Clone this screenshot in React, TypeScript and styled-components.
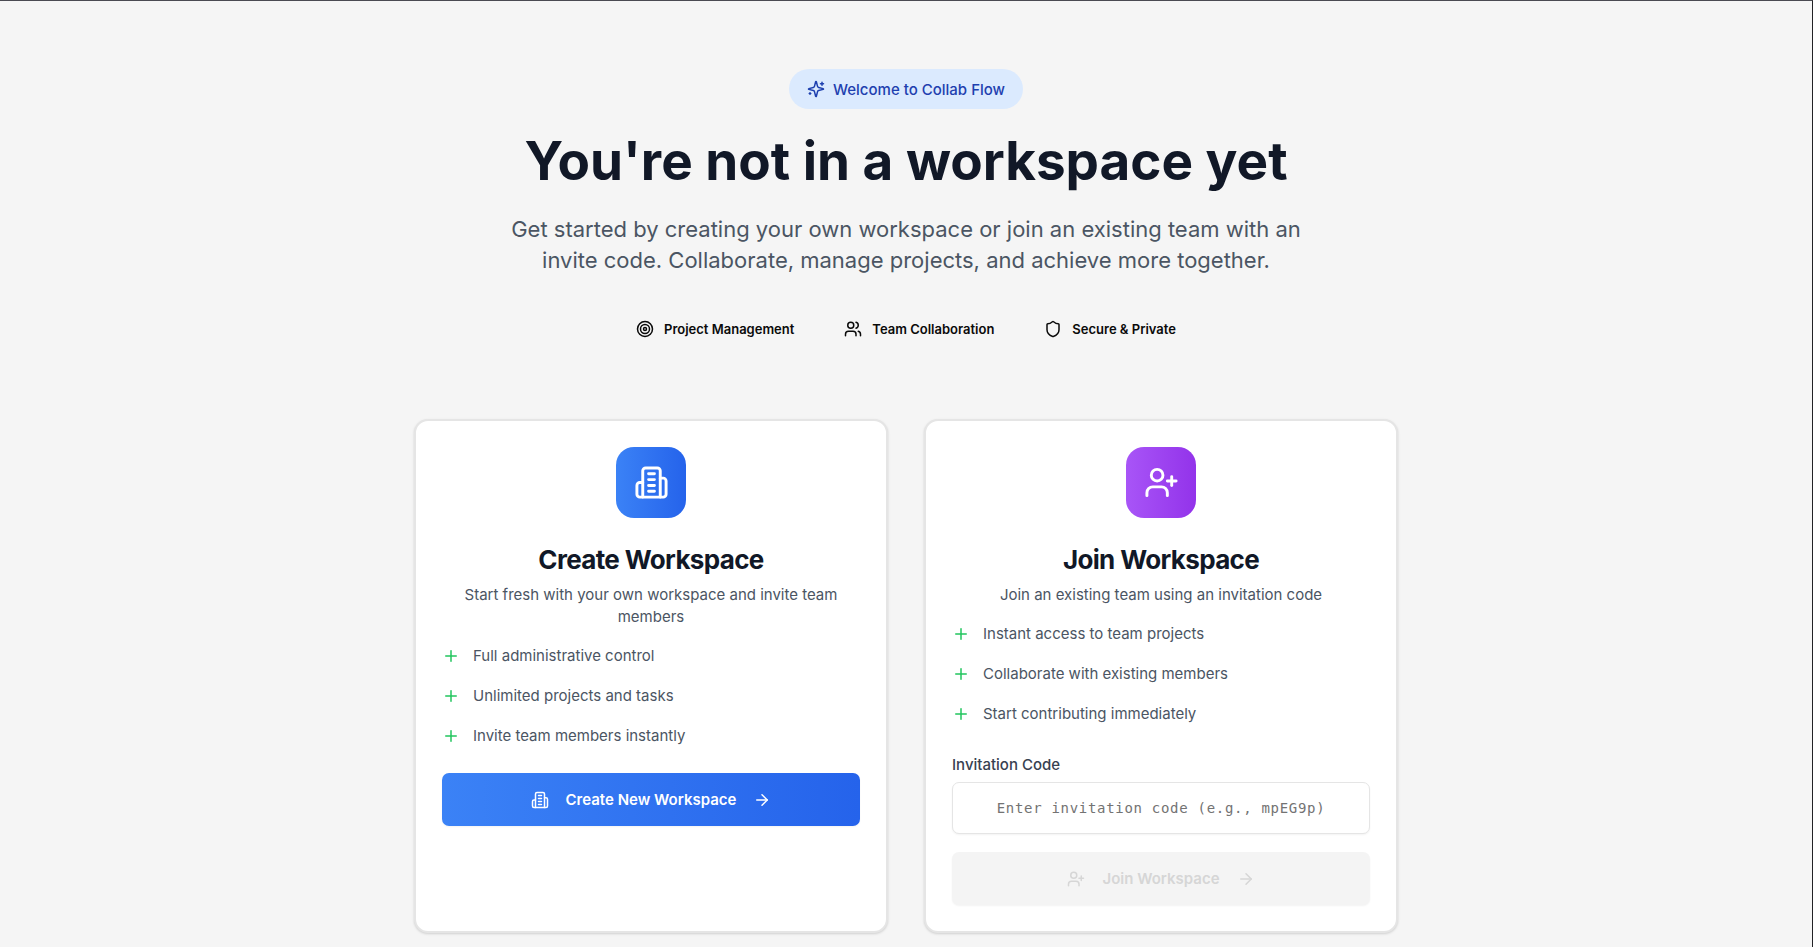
import React, { useState } from "react";
import styled, { createGlobalStyle } from "styled-components";
import { ArrowRight, Plus, Shield, UserPlus } from "lucide-react";

const GlobalStyle = createGlobalStyle`
  *, *::before, *::after { box-sizing: border-box; }
  body {
    margin: 0;
    background: #f5f5f5;
    font-family: Inter, "Liberation Sans", sans-serif;
    color: #0a0a0a;
  }
  h1, h2, p, ul { margin: 0; padding: 0; }
  ul { list-style: none; }
  svg { flex-shrink: 0; }
`;

const Page = styled.main`
  min-height: 100vh;
  display: flex;
  flex-direction: column;
  align-items: center;
  padding: 68px 18px 12px;
  border-top: 1px solid #4a4a52;
  border-right: 1px solid #222226;
`;

const Hero = styled.header`
  display: flex;
  flex-direction: column;
  align-items: center;
  text-align: center;
`;

const WelcomePill = styled.div`
  display: flex;
  align-items: center;
  gap: 8px;
  height: 40px;
  padding: 0 18px;
  border-radius: 20px;
  background: #dbeafe;
  color: #1e40af;
  font-size: 15px;
  font-weight: 500;
`;

const Title = styled.h1`
  margin-top: 26px;
  font-size: 53px;
  line-height: 53px;
  font-weight: 700;
  color: #111827;
`;

const Lead = styled.p`
  max-width: 840px;
  margin-top: 26px;
  font-size: 22px;
  line-height: 31px;
  color: #4b5563;
`;

const Highlights = styled.ul`
  display: flex;
  flex-wrap: wrap;
  justify-content: center;
  gap: 18px 50px;
  margin-top: 42px;
`;

const Highlight = styled.li`
  display: flex;
  align-items: center;
  gap: 10px;
  height: 22px;
  font-size: 13px;
  font-weight: 600;
`;

const Cards = styled.div`
  display: grid;
  grid-template-columns: repeat(auto-fit, minmax(360px, 1fr));
  gap: 36px;
  width: 100%;
  max-width: 984px;
  margin-top: 79px;
`;

const Card = styled.section`
  display: flex;
  flex-direction: column;
  padding: 26px;
  border: 2px solid #e5e5e5;
  border-radius: 14px;
  background: #ffffff;
  box-shadow: 0 1px 3px rgba(0, 0, 0, 0.1), 0 1px 2px rgba(0, 0, 0, 0.06);
`;

const CardHead = styled.div`
  display: flex;
  flex-direction: column;
  align-items: center;
  text-align: center;
`;

const IconTile = styled.div<{ $from: string; $to: string }>`
  display: flex;
  align-items: center;
  justify-content: center;
  width: 70px;
  height: 71px;
  border-radius: 18px;
  background: linear-gradient(to right, ${(p) => p.$from}, ${(p) => p.$to});
  color: #ffffff;
`;

const CardTitle = styled.h2`
  margin-top: 24px;
  font-size: 26px;
  line-height: 35px;
  font-weight: 700;
  letter-spacing: -0.025em;
  color: #111827;
`;

const CardText = styled.p`
  margin-top: 7px;
  font-size: 15px;
  line-height: 22px;
  color: #4b5563;
`;

const Perks = styled.ul`
  display: flex;
  flex-direction: column;
  gap: 18px;
  margin: 17px 0 26px;
`;

const Perk = styled.li`
  display: flex;
  align-items: center;
  gap: 13px;
  font-size: 15px;
  line-height: 22px;
  color: #4b5563;

  svg { color: #22c55e; }
`;

const ActionButton = styled.button`
  display: flex;
  align-items: center;
  justify-content: center;
  gap: 17px;
  width: 100%;
  height: 53px;
  border: 0;
  border-radius: 7px;
  background: linear-gradient(to right, #3b82f6, #2563eb);
  box-shadow: 0 1px 2px rgba(0, 0, 0, 0.05);
  color: #ffffff;
  font-family: inherit;
  font-size: 15px;
  font-weight: 600;
  cursor: pointer;

  &:disabled {
    background: #f4f4f4;
    color: #d6d6d6;
    cursor: default;
  }
`;

const JoinForm = styled.form`
  display: flex;
  flex-direction: column;
`;

const FieldLabel = styled.label`
  font-size: 15px;
  line-height: 28px;
  font-weight: 500;
  color: #374151;
`;

const CodeInput = styled.input`
  width: 100%;
  height: 52px;
  margin: 3px 0 18px;
  padding: 0 13px;
  border: 1px solid #e5e5e5;
  border-radius: 7px;
  background: #ffffff;
  box-shadow: 0 1px 2px rgba(0, 0, 0, 0.05);
  color: #0a0a0a;
  font-family: "DejaVu Sans Mono", "Liberation Mono", monospace;
  font-size: 14px;
  letter-spacing: 0.05em;
  text-align: center;

  &::placeholder { color: #737373; opacity: 1; }
`;

type IconProps = { size: number };

const BuildingIcon = ({ size }: IconProps) => (
  <svg width={size} height={size} viewBox="0 0 24 24" fill="none" stroke="currentColor" strokeWidth={2} strokeLinecap="round" strokeLinejoin="round" aria-hidden="true">
    <path d="M6 22V4a2 2 0 0 1 2-2h8a2 2 0 0 1 2 2v18Z" />
    <path d="M6 12H4a2 2 0 0 0-2 2v6a2 2 0 0 0 2 2h2" />
    <path d="M18 9h2a2 2 0 0 1 2 2v9a2 2 0 0 1-2 2h-2" />
    <path d="M10 6h4M10 10h4M10 14h4M10 18h4" />
  </svg>
);

const TargetIcon = ({ size }: IconProps) => (
  <svg width={size} height={size} viewBox="0 0 24 24" fill="none" stroke="currentColor" strokeWidth={2} aria-hidden="true">
    <circle cx="12" cy="12" r="10" />
    <circle cx="12" cy="12" r="6" />
    <circle cx="12" cy="12" r="2" />
  </svg>
);

const TeamIcon = ({ size }: IconProps) => (
  <svg width={size} height={size} viewBox="0 0 24 24" fill="none" stroke="currentColor" strokeWidth={2} strokeLinecap="round" strokeLinejoin="round" aria-hidden="true">
    <path d="M16 21v-2a4 4 0 0 0-4-4H6a4 4 0 0 0-4 4v2" />
    <circle cx="9" cy="7" r="4" />
    <path d="M22 21v-2a4 4 0 0 0-3-3.87" />
    <path d="M16 3.13a4 4 0 0 1 0 7.75" />
  </svg>
);

const SparklesIcon = ({ size }: IconProps) => (
  <svg width={size} height={size} viewBox="0 0 24 24" fill="none" stroke="currentColor" strokeWidth={2} strokeLinecap="round" strokeLinejoin="round" aria-hidden="true">
    <path d="M9.937 15.5A2 2 0 0 0 8.5 14.063l-6.135-1.582a.5.5 0 0 1 0-.962L8.5 9.936A2 2 0 0 0 9.937 8.5l1.582-6.135a.5.5 0 0 1 .963 0L14.063 8.5A2 2 0 0 0 15.5 9.937l6.135 1.581a.5.5 0 0 1 0 .964L15.5 14.063a2 2 0 0 0-1.437 1.437l-1.582 6.135a.5.5 0 0 1-.963 0z" />
    <path d="M20 3v4M22 5h-4M4 17v2M5 18H3" />
  </svg>
);

const PerkList = ({ items }: { items: string[] }) => (
  <Perks>
    {items.map((item) => (
      <Perk key={item}>
        <Plus size={18} />
        {item}
      </Perk>
    ))}
  </Perks>
);

export default function App() {
  const [code, setCode] = useState("");

  return (
    <>
      <GlobalStyle />
      <Page>
        <Hero>
          <WelcomePill>
            <SparklesIcon size={18} />
            Welcome to Collab Flow
          </WelcomePill>
          <Title>You're not in a workspace yet</Title>
          <Lead>
            Get started by creating your own workspace or join an existing team with an invite code.
            Collaborate, manage projects, and achieve more together.
          </Lead>
          <Highlights>
            <Highlight><TargetIcon size={18} />Project Management</Highlight>
            <Highlight><TeamIcon size={18} />Team Collaboration</Highlight>
            <Highlight><Shield size={18} />Secure &amp; Private</Highlight>
          </Highlights>
        </Hero>

        <Cards>
          <Card>
            <CardHead>
              <IconTile $from="#3b82f6" $to="#2563eb"><BuildingIcon size={35} /></IconTile>
              <CardTitle>Create Workspace</CardTitle>
              <CardText>Start fresh with your own workspace and invite team members</CardText>
            </CardHead>
            <PerkList items={["Full administrative control", "Unlimited projects and tasks", "Invite team members instantly"]} />
            <ActionButton type="button">
              <BuildingIcon size={18} />
              Create New Workspace
              <ArrowRight size={18} />
            </ActionButton>
          </Card>

          <Card>
            <CardHead>
              <IconTile $from="#a855f7" $to="#9333ea"><UserPlus size={35} /></IconTile>
              <CardTitle>Join Workspace</CardTitle>
              <CardText>Join an existing team using an invitation code</CardText>
            </CardHead>
            <PerkList items={["Instant access to team projects", "Collaborate with existing members", "Start contributing immediately"]} />
            <JoinForm onSubmit={(e) => e.preventDefault()}>
              <FieldLabel htmlFor="invite-code">Invitation Code</FieldLabel>
              <CodeInput
                id="invite-code"
                type="text"
                value={code}
                onChange={(e) => setCode(e.target.value)}
                placeholder="Enter invitation code (e.g., mpEG9p)"
              />
              <ActionButton type="submit" disabled={!code}>
                <UserPlus size={18} />
                Join Workspace
                <ArrowRight size={18} />
              </ActionButton>
            </JoinForm>
          </Card>
        </Cards>
      </Page>
    </>
  );
}
